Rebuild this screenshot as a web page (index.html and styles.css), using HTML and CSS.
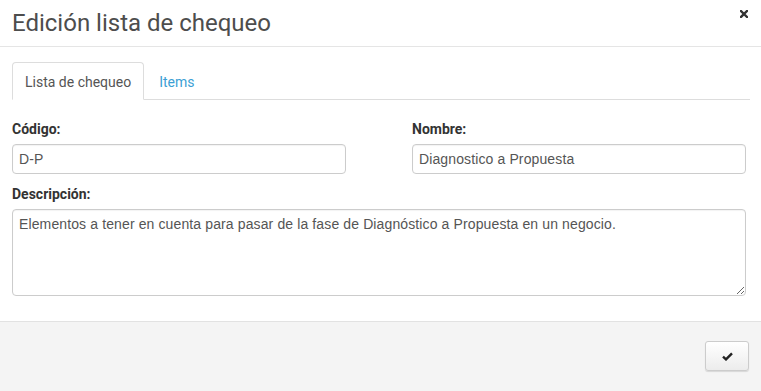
FILE: index.html
```html
<!DOCTYPE html>
<html lang="es">
<head>
<meta charset="utf-8">
<title>Edición lista de chequeo</title>
<link rel="stylesheet" href="styles.css">
</head>
<body>
<div class="modal">
  <div class="modal-header">
    <h4 class="modal-title">Edición lista de chequeo</h4>
    <button class="close" type="button" aria-label="Cerrar">
      <svg width="8" height="8" viewBox="0 0 8 8"><path d="M1 1L7 7M7 1L1 7" stroke="#333" stroke-width="2.4" stroke-linecap="square"/></svg>
    </button>
  </div>
  <div class="modal-body">
    <ul class="nav-tabs">
      <li class="tab active">Lista de chequeo</li>
      <li class="tab">Items</li>
    </ul>
    <div class="form">
      <div class="row">
        <div class="group">
          <label class="label">Código:</label>
          <input class="control" type="text" value="D-P">
        </div>
        <div class="group">
          <label class="label">Nombre:</label>
          <input class="control" type="text" value="Diagnostico a Propuesta">
        </div>
      </div>
      <div class="group wide">
        <label class="label">Descripción:</label>
        <textarea class="control area">Elementos a tener en cuenta para pasar de la fase de Diagnóstico a Propuesta en un negocio.</textarea>
      </div>
    </div>
  </div>
  <div class="modal-footer">
    <button class="btn" type="button" aria-label="Guardar">
      <svg width="11" height="9" viewBox="0 0 11 9"><path d="M1 4.6L4 7.4L10 1.4" fill="none" stroke="#222" stroke-width="2.4"/></svg>
    </button>
  </div>
</div>
</body>
</html>
```

FILE: styles.css
```css
html, body {
  margin: 0;
  padding: 0;
  background: #fff;
}
body {
  font-family: Roboto, "Liberation Sans", Arial, sans-serif;
  font-size: 14px;
  color: #333;
}
.modal {
  width: 761px;
  height: 391px;
  display: flex;
  flex-direction: column;
  background: #fff;
}
.modal-header {
  display: flex;
  justify-content: space-between;
  align-items: flex-start;
  padding: 8px 12px 8px 12px;
  border-bottom: 1px solid #e5e5e5;
}
.modal-title {
  margin: 0;
  font-family: Roboto, sans-serif;
  font-weight: 400;
  font-size: 24px;
  line-height: 30px;
  color: #4d4d4d;
}
.close {
  border: 0;
  background: none;
  padding: 0;
  margin: 2px 1px 0 0;
  width: 8px;
  height: 8px;
  display: flex;
  cursor: pointer;
}
.modal-body {
  padding: 15px 11px 25px 12px;
}
.nav-tabs {
  list-style: none;
  margin: 0;
  padding: 0;
  display: flex;
  gap: 2px;
  border-bottom: 1px solid #ddd;
}
.tab {
  margin-bottom: -1px;
  padding: 9px 12px 7px 12px;
  line-height: 20px;
  border: 1px solid transparent;
  border-radius: 4px 4px 0 0;
  color: #3c9fd4;
}
.tab.active {
  color: #555;
  background: #fff;
  border-color: #ddd #ddd transparent #ddd;
}
.form {
  width: 734px;
}
.row {
  display: flex;
  justify-content: space-between;
}
.group {
  display: flex;
  flex-direction: column;
  width: 334px;
  padding-top: 19px;
}
.group.wide {
  width: 734px;
  padding-top: 10px;
}
.label {
  font-weight: 700;
  line-height: 20px;
  margin-bottom: 5px;
  color: #333;
}
.control {
  box-sizing: border-box;
  height: 30px;
  width: 100%;
  margin: 0;
  padding: 0 6px;
  border: 1px solid #ccc;
  border-radius: 4px;
  font-family: "Liberation Sans", Arial, sans-serif;
  font-size: 14px;
  letter-spacing: 0.12px;
  color: #555;
  background: #fff;
  box-shadow: inset 0 1px 1px rgba(0,0,0,0.05);
}
.area {
  height: 87px;
  padding: 6px 6px;
  line-height: normal;
  resize: vertical;
}
.modal-footer {
  flex: 1;
  display: flex;
  justify-content: flex-end;
  align-items: flex-start;
  padding: 19px 12px 0 0;
  background: #f4f4f4;
  border-top: 1px solid #e2e2e2;
}
.btn {
  width: 44px;
  height: 30px;
  padding: 0;
  display: flex;
  align-items: center;
  justify-content: center;
  border: 1px solid #ccc;
  border-radius: 3px;
  background: linear-gradient(#fff, #ececec);
  box-shadow: 0 1px 1px rgba(0,0,0,0.12);
  cursor: pointer;
}
```
